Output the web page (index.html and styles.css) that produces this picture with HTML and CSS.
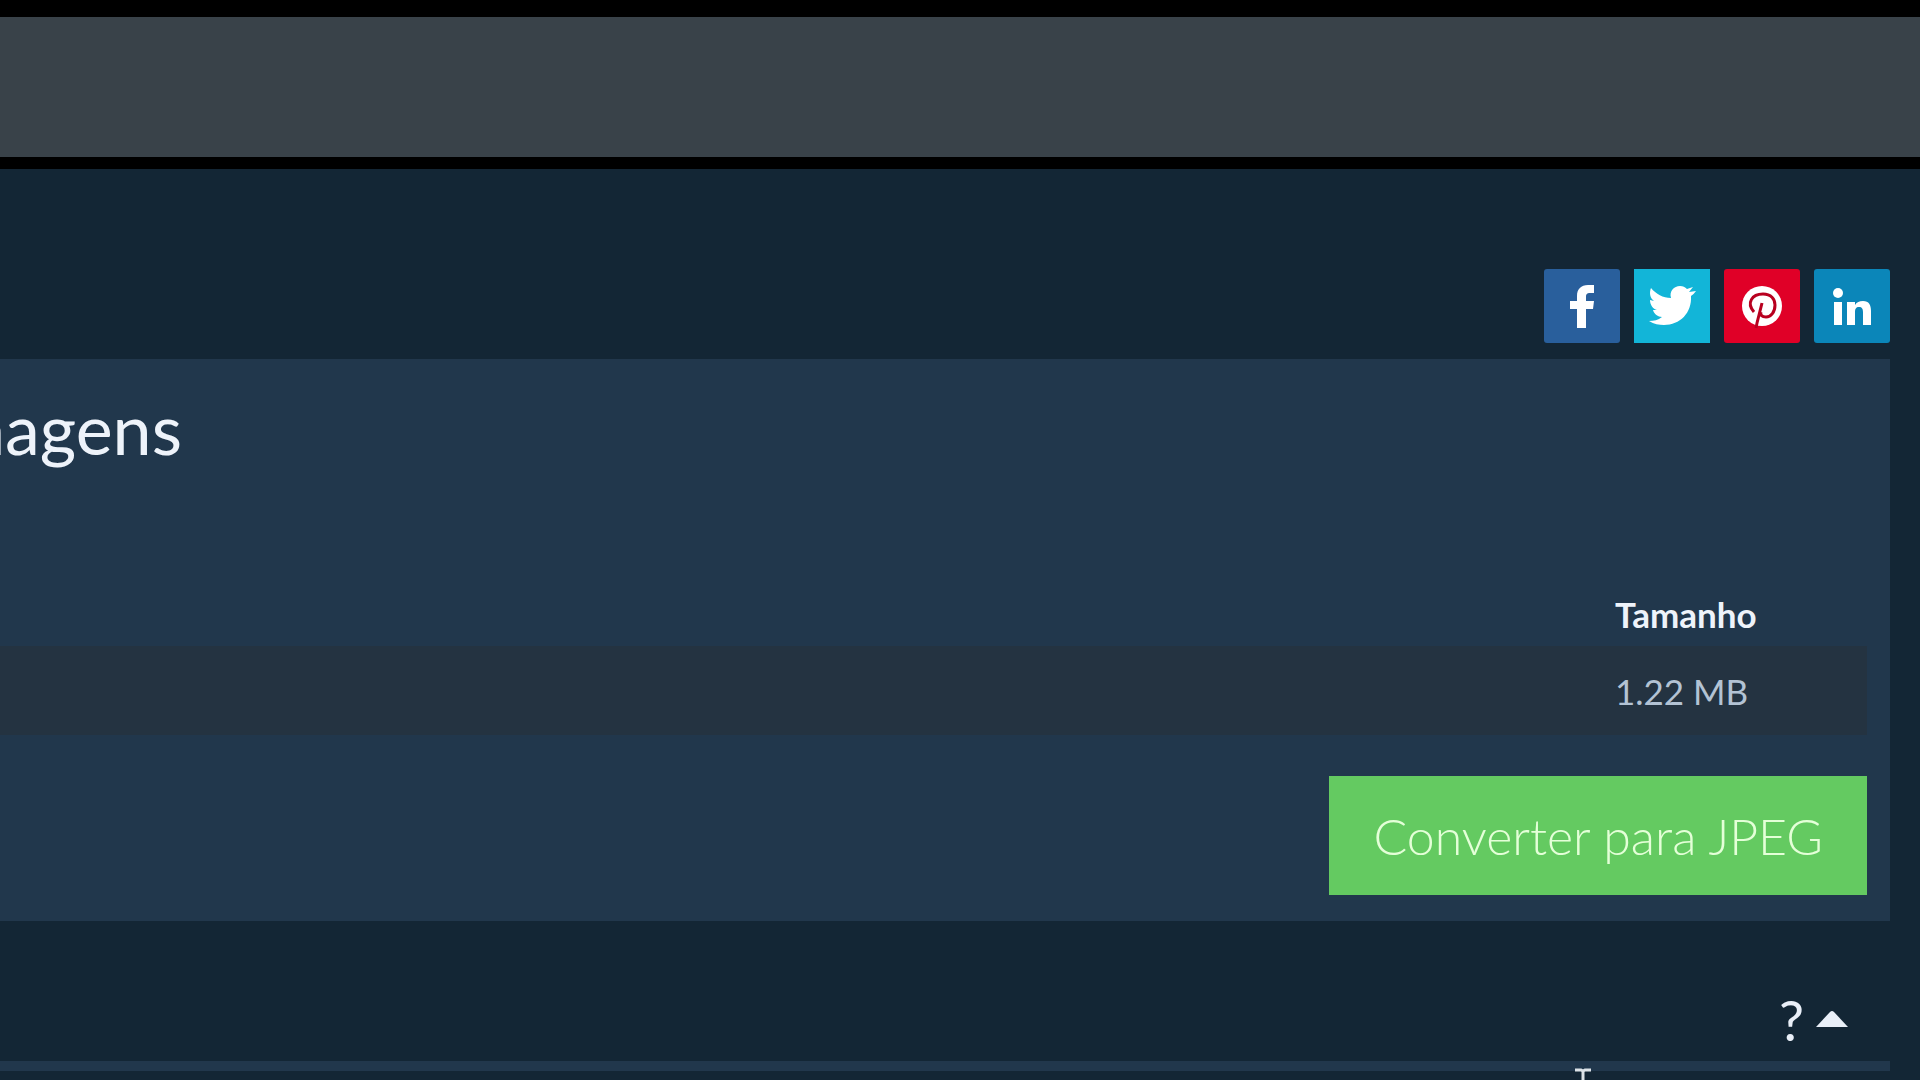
FILE: index.html
```html
<!DOCTYPE html>
<html lang="pt">
<head>
    <meta charset="UTF-8">
    <meta name="viewport" content="width=device-width, initial-scale=1.0">
    <title>Conversor de imagens</title>
    <link rel="stylesheet" href="styles.css">
</head>
<body>
    <header class="topbar"></header>
    <main class="content">
        <nav class="share" aria-label="Compartilhar">
            <a class="share-link facebook" href="#" aria-label="Facebook">
                <svg viewBox="0 0 76 74"><path d="M33 59V40h-7v-8h7v-5c0-7 4-11 11-11h6v8h-4c-3 0-4 1-4 4v4h8l-1 8h-7v19z"/></svg>
            </a>
            <a class="share-link twitter" href="#" aria-label="Twitter">
                <svg viewBox="0 0 76 74"><path d="M62 22q-2 3-5 5c1 17-11 29-27 29-5 0-10-1-15-4 5 0 9-1 13-4-4 0-8-3-9-7h4c-4-1-7-5-7-10l4 1c-4-3-5-8-3-13 5 6 12 10 20 10-2-7 3-12 9-12 3 0 5 1 7 3l6-2-4 5z"/></svg>
            </a>
            <a class="share-link pinterest" href="#" aria-label="Pinterest">
                <svg viewBox="0 0 76 74"><circle cx="38" cy="37" r="20"/><path class="mark" d="M30 43c-8-9-2-18 9-18 8 0 12 5 12 11 0 7-4 12-9 12-4 0-6-2-5-5M38 34l-5 20-1 5"/></svg>
            </a>
            <a class="share-link linkedin" href="#" aria-label="LinkedIn">
                <svg viewBox="0 0 76 74"><circle cx="24" cy="24" r="5"/><path d="M20 33h8v23h-8zM33 33h8v3c2-3 4-4 8-4 6 0 8 4 8 10v14h-8V43c0-3-1-5-4-5s-4 2-4 5v13h-8z"/></svg>
            </a>
        </nav>
        <section class="panel">
            <h1 class="title">imagens</h1>
            <table class="files">
                <thead>
                    <tr><th>Tamanho</th></tr>
                </thead>
                <tbody>
                    <tr><td>1.22 MB</td></tr>
                </tbody>
            </table>
            <button class="convert" type="button">Converter para JPEG</button>
        </section>
        <div class="help">
            <button class="help-toggle" type="button" aria-label="Ajuda">
                <span>?</span>
                <svg class="arrow" viewBox="0 0 32 16"><path d="M0 16L14 1q2-2 4 0L32 16z"/></svg>
            </button>
        </div>
        <hr class="divider">
    </main>
    <svg class="cursor" viewBox="0 0 16 24"><path d="M0 2h6l2 1 2-1h6M8 3v21"/></svg>
</body>
</html>
```
FILE: styles.css
```css
* {
    box-sizing: border-box;
}

body {
    margin: 0;
    min-height: 100vh;
    position: relative;
    overflow: hidden;
    background: #132635;
    color: #eef3fa;
    font-family: Lato, sans-serif;
}

.topbar {
    height: 169px;
    background: #394249;
    border-top: 17px solid #000;
    border-bottom: 12px solid #000;
}

.content {
    padding: 100px 30px 0 0;
}

/* Share buttons */
.share {
    display: flex;
    justify-content: flex-end;
    gap: 14px;
    margin-bottom: 16px;
}

.share-link {
    width: 76px;
    height: 74px;
    border-radius: 3px;
}

.share-link svg {
    display: block;
    fill: #fff;
}

.facebook { background: #295f9c; }
.twitter { background: #12b5d8; border-radius: 0; }
.pinterest { background: #e00027; }
.linkedin { background: #0b86b9; }

.share-link .mark {
    fill: none;
    stroke: #b8001f;
    stroke-width: 3px;
}

/* Conversion panel */
.panel {
    display: flex;
    flex-direction: column;
    padding: 30px 23px 26px 0;
    background: #21374c;
}

.title {
    display: flex;
    justify-content: flex-end;
    width: 182px;
    margin: 0 0 106px;
    font-size: 70px;
    font-weight: 400;
    line-height: 78px;
}

.files {
    width: 100%;
    border-collapse: collapse;
    margin-bottom: 41px;
    text-align: left;
}

.files th,
.files td {
    padding: 0 0 0 calc(100% - 252px);
    font-size: 35px;
    line-height: 42px;
}

.files th {
    height: 73px;
    padding-top: 8px;
    font-weight: 700;
}

.files td {
    height: 89px;
    background: #243341;
    color: #b3c3d4;
}

.convert {
    align-self: flex-end;
    height: 119px;
    padding: 0 44px;
    border: 0;
    background: #64ca61;
    color: #e4ffd8;
    font: 300 50px Lato, sans-serif;
}

/* Help row */
.help {
    display: flex;
    justify-content: flex-end;
    align-items: center;
    height: 140px;
    padding: 56px 42px 0 0;
}

.help-toggle {
    display: flex;
    align-items: center;
    gap: 12px;
    padding: 0;
    border: 0;
    background: none;
    color: #e9eff8;
    font: 400 56px Lato, sans-serif;
}

.arrow {
    width: 32px;
    height: 16px;
    fill: #e9eff8;
}

.divider {
    height: 10px;
    margin: 0;
    border: 0;
    background: #21374c;
}

.cursor {
    position: absolute;
    left: 1575px;
    bottom: -12px;
    width: 16px;
    height: 24px;
    fill: none;
    stroke: #dde3e8;
    stroke-width: 3px;
}
```
